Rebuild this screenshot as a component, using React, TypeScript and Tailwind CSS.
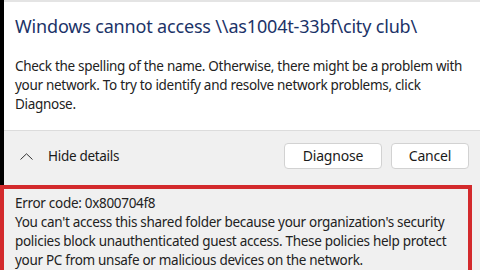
import React from "react";

const App: React.FC = () => {
  return (
    <div className="w-[480px] h-[270px] overflow-hidden bg-[#f0f0f0] text-[#1a1a1a] font-['Noto_Sans',sans-serif]">
      <div className="flex h-[185px]">
        <div className="w-[4px] shrink-0 bg-black"></div>
        <div className="flex-1 min-w-0 flex flex-col">
          <div className="h-[2px] bg-[#e4e4e4]"></div>

          {/* message area */}
          <div className="h-[129px] bg-white border-b border-[#dcdcdc] pl-[11px] pt-[12px] overflow-hidden">
            <h1 className="text-[18px] tracking-[-0.17px] leading-[24px] text-[#1b3368] whitespace-nowrap">
              Windows cannot access \\as1004t-33bf\city club\
            </h1>
            <p className="mt-[19px] text-[13.5px] tracking-[-0.3px] leading-[19px] text-[#222] whitespace-nowrap">
              Check the spelling of the name. Otherwise, there might be a problem with
              <br />
              your network. To try to identify and resolve network problems, click
              <br />
              Diagnose.
            </p>
          </div>

          {/* footer */}
          <div className="flex-1 flex items-start pt-[12px] pl-[16px] pr-[11px]">
            <div className="flex items-center h-[26px] gap-[15px]">
              <svg width="13" height="7" viewBox="0 0 13 7" fill="none">
                <path d="M0.5 6.5 L6.5 0.8 L12.5 6.5" stroke="#333" strokeWidth="1" />
              </svg>
              <span className="text-[13.5px] tracking-[-0.3px] text-[#1a1a1a]">Hide details</span>
            </div>
            <div className="ml-auto flex gap-[9px]">
              <button className="w-[98px] h-[26px] bg-white border border-[#d2d2d2] rounded-[4px] text-[14px] tracking-[-0.2px] leading-none text-[#1a1a1a]">
                Diagnose
              </button>
              <button className="w-[78px] h-[26px] bg-white border border-[#d2d2d2] rounded-[4px] text-[14px] tracking-[-0.2px] leading-none text-[#1a1a1a]">
                Cancel
              </button>
            </div>
          </div>
        </div>
      </div>

      {/* highlighted error details */}
      <div className="w-[472px] h-[100px] border-[4px] border-b-0 border-[#d32a2c] pl-[11px] pt-[5px] text-[13.5px] tracking-[-0.3px] leading-[19px] text-[#222] whitespace-nowrap">
        Error code: 0x800704f8
        <br />
        You can't access this shared folder because your organization's security
        <br />
        policies block unauthenticated guest access. These policies help protect
        <br />
        your PC from unsafe or malicious devices on the network.
      </div>
    </div>
  );
};

export default App;
